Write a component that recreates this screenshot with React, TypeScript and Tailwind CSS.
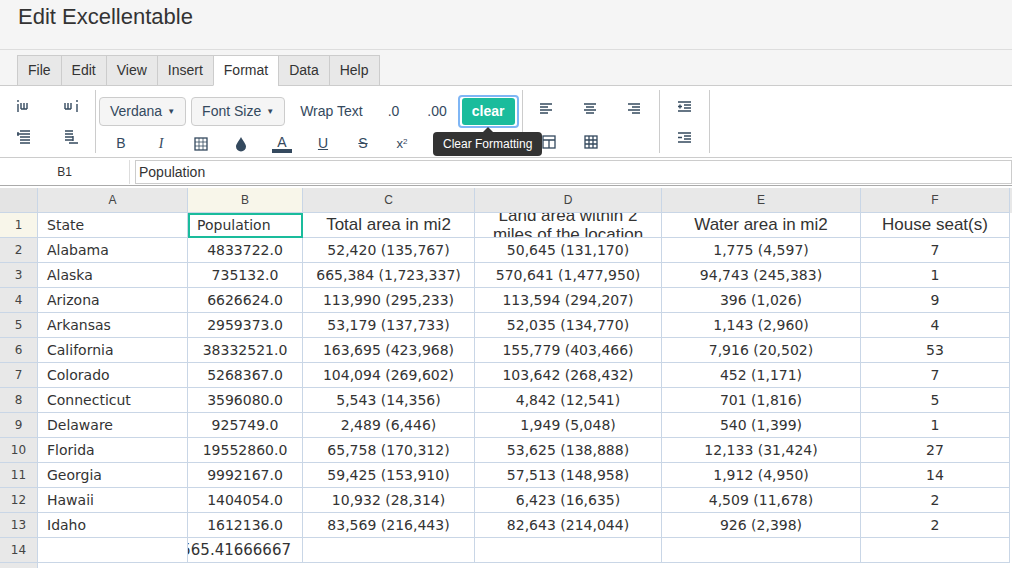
import React from "react";

const rows: string[][] = [
  ["Alabama", "4833722.0", "52,420 (135,767)", "50,645 (131,170)", "1,775 (4,597)", "7"],
  ["Alaska", "735132.0", "665,384 (1,723,337)", "570,641 (1,477,950)", "94,743 (245,383)", "1"],
  ["Arizona", "6626624.0", "113,990 (295,233)", "113,594 (294,207)", "396 (1,026)", "9"],
  ["Arkansas", "2959373.0", "53,179 (137,733)", "52,035 (134,770)", "1,143 (2,960)", "4"],
  ["California", "38332521.0", "163,695 (423,968)", "155,779 (403,466)", "7,916 (20,502)", "53"],
  ["Colorado", "5268367.0", "104,094 (269,602)", "103,642 (268,432)", "452 (1,171)", "7"],
  ["Connecticut", "3596080.0", "5,543 (14,356)", "4,842 (12,541)", "701 (1,816)", "5"],
  ["Delaware", "925749.0", "2,489 (6,446)", "1,949 (5,048)", "540 (1,399)", "1"],
  ["Florida", "19552860.0", "65,758 (170,312)", "53,625 (138,888)", "12,133 (31,424)", "27"],
  ["Georgia", "9992167.0", "59,425 (153,910)", "57,513 (148,958)", "1,912 (4,950)", "14"],
  ["Hawaii", "1404054.0", "10,932 (28,314)", "6,423 (16,635)", "4,509 (11,678)", "2"],
  ["Idaho", "1612136.0", "83,569 (216,443)", "82,643 (214,044)", "926 (2,398)", "2"],
];

const cols = ["w-[150px]", "w-[115px]", "w-[172px]", "w-[187px]", "w-[199px]", "w-[149px]"];
const letters = ["A", "B", "C", "D", "E", "F"];
const box = "h-[25px] shrink-0 border-r border-b border-[#c9d6e6] overflow-hidden flex items-center";
const cell = `${box} whitespace-nowrap`;
const arial = { fontFamily: "'Liberation Sans', Arial, sans-serif" };

function Ico({ children }: { children: React.ReactNode }) {
  return (
    <svg width="16" height="16" viewBox="0 0 16 16" fill="none" stroke="#34495e" strokeWidth="1.3">
      {children}
    </svg>
  );
}

function Lines({ d }: { d: string }) {
  return (
    <svg width="16" height="14" viewBox="0 0 16 14" fill="none" stroke="#34495e" strokeWidth="1.4">
      <path d={d} />
    </svg>
  );
}

export default function App() {
  return (
    <div className="w-[1012px] h-[568px] overflow-hidden bg-white text-[#333]" style={arial}>
      <div className="h-[50px] bg-[#f5f5f5] border-b border-[#ddd] pl-[18px] text-[22px] text-[#333] leading-[34px]">Edit Excellentable</div>
      <div className="h-[36px] bg-[#f5f5f5] flex items-end pl-[17px] border-b border-[#ccc]">
        {["File", "Edit", "View", "Insert", "Format", "Data", "Help"].map((t) => (
          <div key={t} className={`h-[31px] px-[10px] flex items-center text-[14px] border border-[#ccc] border-r-0 last:border-r -mb-px ${t === "Format" ? "bg-white border-b-white" : "bg-[#e8e8e8]"}`}>{t}</div>
        ))}
      </div>
      <div className="h-[72px] flex border-b border-[#ccc] relative">
        <div className="w-[96px] grid grid-cols-2 grid-rows-2 border-r border-[#ccc] my-[4px] items-center justify-items-center">
          <Lines d="M2 1v2M2 5v8M5 4v6M8 4v6M11 4v6M5 10h6" />
          <Lines d="M14 1v2M14 5v8M2 4v6M5 4v6M8 4v6M2 10h6" />
          <Lines d="M4 1h10M1 4h3M4 4h10M4 7h10M4 10h10M4 13h10M2 2v4" />
          <Lines d="M2 1h8M2 4h8M2 7h8M2 10h8M6 13h9M10 6v5" />
        </div>
        <div className="flex flex-col pl-[3px] pt-[5px] gap-[5px] w-[427px] border-r border-[#ccc] my-[4px]">
          <div className="flex items-center text-[14px] text-[#34495e]">
            <div className="h-[29px] px-[10px] flex items-center border border-[#ccc] rounded bg-[#f5f5f5]">Verdana <span className="ml-[5px] text-[8px]">▼</span></div>
            <div className="h-[29px] px-[10px] ml-[5px] flex items-center border border-[#ccc] rounded bg-[#f5f5f5]">Font Size <span className="ml-[5px] text-[8px]">▼</span></div>
            <div className="ml-[15px]">Wrap Text</div>
            <div className="ml-[25px]">.0</div>
            <div className="ml-[28px]">.00</div>
            <div className="ml-[11px] h-[33px] px-[2px] flex items-center border-2 border-[#7fb6f5] rounded">
              <div className="h-[27px] px-[10px] flex items-center bg-[#1abc9c] text-white font-bold rounded-[3px] text-[14px]">clear</div>
            </div>
          </div>
          <div className="flex items-center text-[#34495e] text-[14px]">
            <span className="w-[40px] text-center ml-[2px]">B</span>
            <span className="w-[40px] text-center italic" style={{ fontFamily: "'Liberation Serif', serif" }}>I</span>
            <span className="w-[40px] flex justify-center"><Ico><rect x="2" y="2" width="12" height="12" /><path d="M2 6h12M2 10h12M6 2v12M10 2v12" strokeWidth="0.8" /></Ico></span>
            <span className="w-[40px] flex justify-center"><svg width="14" height="16" viewBox="0 0 14 16"><path d="M7 1 C9 5 12 8 12 10.5 A5 5 0 0 1 2 10.5 C2 8 5 5 7 1Z" fill="#34495e" /></svg></span>
            <span className="w-[42px] flex flex-col items-center"><span className="leading-[14px]">A</span><span className="w-[20px] h-[4px] bg-[#34495e]" /></span>
            <span className="w-[40px] text-center underline">U</span>
            <span className="w-[40px] text-center line-through">S</span>
            <span className="w-[38px] text-center text-[13px]">x<sup className="text-[8px]">2</sup></span>
          </div>
        </div>
        <div className="w-[137px] border-r border-[#ccc] my-[4px] pl-[16px] pt-[12px] flex flex-col gap-[18px]">
          <div className="flex gap-[28px]">
            <Lines d="M1 2h12M1 5h8M1 8h12M1 11h8" />
            <Lines d="M1 2h12M3 5h8M1 8h12M3 11h8" />
            <Lines d="M1 2h12M5 5h8M1 8h12M5 11h8" />
          </div>
          <div className="flex gap-[26px] pl-[2px]">
            <Ico><rect x="2" y="2" width="12" height="12" /><path d="M2 6h12M8 6v8" /></Ico>
            <Ico><rect x="2" y="2" width="12" height="12" /><path d="M2 6h12M2 10h12M6 2v12M10 2v12" /></Ico>
          </div>
        </div>
        <div className="w-[50px] border-r border-[#ccc] my-[4px] flex flex-col items-center pt-[11px] gap-[17px]">
          <Lines d="M1 1h13M7 4h7M7 7h7M1 10h13M1 5.5h4M3 3.5v4" />
          <Lines d="M1 1h13M7 4h7M7 7h7M1 10h13M1 5.5h4" />
        </div>
        <div className="absolute left-[433px] top-[41px] flex flex-col items-center">
          <div className="w-0 h-0 border-x-[5px] border-x-transparent border-b-[5px] border-b-[#333]" />
          <div className="bg-[#333] text-white text-[12px] px-[10px] h-[24px] flex items-center rounded-[4px]">Clear Formatting</div>
        </div>
      </div>
      <div className="h-[28px] flex items-center border-b border-[#aaa] pt-[1px]">
        <div className="w-[130px] h-[24px] border-r border-[#ddd] flex items-center justify-center text-[12px]">B1</div>
        <div className="flex-1 h-[24px] ml-[5px] border border-[#ccc] flex items-center pl-[3px] text-[14px]">Population</div>
      </div>
      <div className="mt-[2px] text-[14px]" style={{ fontFamily: "'DejaVu Sans', Verdana, sans-serif" }}>
        <div className="flex bg-[#e8e8e8] text-[12px] text-[#444]" style={arial}>
          <div className={`${cell} w-[38px] bg-[#e4e4e4]`} />
          {letters.map((l, i) => (
            <div key={l} className={`${cell} ${cols[i]} justify-center ${i === 1 ? "bg-[#f8f6ea]" : ""}`}>{l}</div>
          ))}
        </div>
        <div className="flex">
          <div className={`${cell} w-[38px] justify-center bg-[#f8f6ea] text-[12px] text-[#444]`}>1</div>
          <div className={`${cell} ${cols[0]} pl-[9px]`}>State</div>
          <div className={`${cell} ${cols[1]} pl-[9px] outline-2 outline-[#1abc9c] -outline-offset-2`}>Population</div>
          <div className={`${cell} ${cols[2]} justify-center text-[17px]`} style={arial}>Total area in mi2</div>
          <div className={`${box} ${cols[3]} justify-center text-[17px] leading-[19px] text-center px-[14px]`} style={arial}>Land area within 2 miles of the location</div>
          <div className={`${cell} ${cols[4]} justify-center text-[17px]`} style={arial}>Water area in mi2</div>
          <div className={`${cell} ${cols[5]} justify-center text-[17px]`} style={arial}>House seat(s)</div>
        </div>
        {rows.map((r, ri) => (
          <div key={ri} className="flex">
            <div className={`${cell} w-[38px] justify-center bg-[#e8e8e8] text-[12px] text-[#444]`}>{ri + 2}</div>
            {r.map((v, ci) => (
              <div key={ci} className={`${cell} ${cols[ci]} ${ci === 0 ? "pl-[9px]" : "justify-center"}`}>{v}</div>
            ))}
          </div>
        ))}
        <div className="flex">
          <div className={`${cell} w-[38px] justify-center bg-[#e8e8e8] text-[12px] text-[#444]`}>14</div>
          <div className={`${cell} ${cols[0]}`} />
          <div className={`${cell} ${cols[1]} justify-end pr-[11px] text-[15px]`}>565.41666667</div>
          {[2, 3, 4, 5].map((c) => <div key={c} className={`${cell} ${cols[c]}`} />)}
        </div>
        <div className="flex">
          <div className={`${cell} w-[38px] bg-[#e8e8e8]`} />
        </div>
      </div>
    </div>
  );
}
